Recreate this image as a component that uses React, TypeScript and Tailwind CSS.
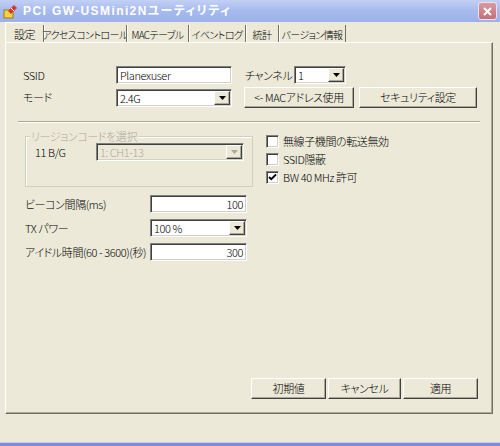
import React from "react";

const font =
  "font-['Noto_Sans_CJK_JP','Liberation_Sans',sans-serif] [font-feature-settings:'palt'] font-light tracking-[-0.4px]";

// sunken white frame used by edits and combo boxes
const sunken =
  "border border-t-[#808080] border-l-[#808080] border-b-white border-r-white shadow-[inset_1px_1px_0_#404040,inset_-1px_-1px_0_#d4d0c8]";

const raised =
  "border border-t-white border-l-white border-b-[#404040] border-r-[#404040] shadow-[inset_-1px_-1px_0_#aca899]";

const Arrow = ({ disabled }: { disabled?: boolean }) => (
  <div className={`w-[16px] h-full bg-[#ece9d8] ${raised} flex items-center justify-center`}>
    <svg width="7" height="4" viewBox="0 0 7 4">
      <path d="M0 0h7L3.5 4z" fill={disabled ? "#aca899" : "#000"} />
    </svg>
  </div>
);

const Combo = ({
  value,
  w,
  disabled,
}: {
  value: string;
  w: string;
  disabled?: boolean;
}) => (
  <div
    className={`${w} h-[18px] ${sunken} ${disabled ? "bg-[#ece9d8] text-[#aca899]" : "bg-white text-black"} flex items-stretch p-[1px]`}
  >
    <div className="flex-1 pl-[2px] leading-[14px] text-[11px] whitespace-nowrap">{value}</div>
    <Arrow disabled={disabled} />
  </div>
);

const Edit = ({ value, w, right }: { value: string; w: string; right?: boolean }) => (
  <div
    className={`${w} h-[18px] bg-white ${sunken} text-[11px] leading-[16px] px-[3px] ${right ? "text-right" : ""}`}
  >
    {value}
  </div>
);

const Button = ({ label, w, h = "h-[21px]" }: { label: string; w: string; h?: string }) => (
  <div className={`${w} ${h} bg-[#ece9d8] ${raised} flex items-center justify-center text-[11px] whitespace-nowrap`}>
    {label}
  </div>
);

const Check = ({ label, checked }: { label: string; checked?: boolean }) => (
  <div className="h-[18px] flex items-center gap-[3px] text-[11px] whitespace-nowrap">
    <div className={`w-[13px] h-[13px] bg-white ${sunken} flex items-center justify-center`}>
      {checked && (
        <svg width="9" height="9" viewBox="0 0 9 9">
          <path d="M1 4l2.2 2.2L8 1.5" stroke="#000" strokeWidth="1.8" fill="none" />
        </svg>
      )}
    </div>
    <span className="ml-[1px]">{label}</span>
  </div>
);

const tabs = [
  { t: "アクセスコントロール", w: "w-[83px]" },
  { t: "MACテーブル", w: "w-[62px]" },
  { t: "イベントログ", w: "w-[57px]" },
  { t: "統計", w: "w-[33px]" },
  { t: "バージョン情報", w: "w-[67px]" },
];

export default function App() {
  return (
    <div className={`w-[500px] h-[446px] bg-[#ece9d8] flex flex-col overflow-hidden text-black ${font}`}>
      {/* title bar */}
      <div className="h-[22px] bg-gradient-to-b from-[#c2d0f5] via-[#a6baee] to-[#9cb1ea] flex items-center pl-[3px] pr-[3px]">
        <svg width="15" height="15" viewBox="0 0 15 15">
          <rect x="1" y="6" width="9" height="8" fill="#f5d33c" stroke="#a07a10" strokeWidth="1" />
          <path d="M5 7l6-6 3 3-6 6z" fill="#d63a2e" />
          <path d="M8 4l3 3" stroke="#fff" strokeWidth="1" />
        </svg>
        <span className="ml-[5px] text-white font-semibold text-[12px] tracking-[1.4px] font-['Liberation_Sans','Noto_Sans_CJK_JP',sans-serif]">
          PCI GW-USMini2Nユーティリティ
        </span>
        <div className="ml-auto w-[19px] h-[18px] rounded-[3px] border border-[#f0e0e4] bg-gradient-to-b from-[#d99aa2] to-[#c46e7a] flex items-center justify-center">
          <svg width="9" height="9" viewBox="0 0 9 9">
            <path d="M1 1l7 7M8 1L1 8" stroke="#fff" strokeWidth="2" />
          </svg>
        </div>
      </div>

      {/* tabs */}
      <div className="h-[20px] flex items-end pl-[5px] text-[10px] tracking-[-0.6px] whitespace-nowrap">
        <div className="h-[20px] w-[38px] pt-[3px] flex items-center justify-center border-t border-l border-white text-[11px]">設定</div>
        {tabs.map((t) => (
          <div
            key={t.t}
            className={`${t.w} h-[17px] pt-[2px] flex items-center justify-center border-l border-[#716f64] shadow-[inset_1px_0_0_white]`}
          >
            {t.t}
          </div>
        ))}
        <div className="h-[17px] border-l border-[#716f64]" />
      </div>

      {/* tab panel */}
      <div className="ml-[5px] mr-[7px] h-[372px] border border-t-white border-l-white border-b-[#716f64] border-r-[#716f64] shadow-[inset_-1px_-1px_0_#aca899] flex flex-col pl-[17px] text-[11px] whitespace-nowrap">
        {/* SSID / channel */}
        <div className="mt-[22px] h-[20px] flex items-center">
          <div className="w-[93px]">SSID</div>
          <Edit value="Planexuser" w="w-[116px]" />
          <div className="ml-[13px] w-[49px]">チャンネル</div>
          <Combo value="1" w="w-[52px]" />
        </div>
        {/* mode / buttons */}
        <div className="mt-[2px] h-[21px] flex items-center">
          <div className="w-[93px]">モード</div>
          <Combo value="2.4G" w="w-[116px]" />
          <div className="ml-[12px]">
            <Button label="<- MACアドレス使用" w="w-[110px]" />
          </div>
          <div className="ml-[5px]">
            <Button label="セキュリティ設定" w="w-[118px]" />
          </div>
        </div>

        <div className="mt-[13px] mr-[12px] -ml-[5px] h-[2px] border-t border-[#aca899] border-b border-b-white" />

        {/* region + checkboxes */}
        <div className="mt-[7px] flex items-start">
          <div className="mt-[6px] ml-[2px] w-[228px] h-[51px] border border-[#d0d0bf] shadow-[inset_1px_1px_0_white] relative">
            <span className="absolute -top-[8px] left-[4px] bg-[#ece9d8] text-[#aca899] px-[1px] leading-[14px]">
              リージョンコードを選択
            </span>
            <div className="mt-[6px] ml-[9px] flex items-center">
              <div className="w-[61px]">11 B/G</div>
              <Combo value="1: CH1-13" w="w-[148px]" disabled />
            </div>
          </div>
          <div className="ml-[13px] mt-[2px] flex flex-col">
            <Check label="無線子機間の転送無効" />
            <Check label="SSID隠蔽" />
            <Check label="BW 40 MHz 許可" checked />
          </div>
        </div>

        {/* beacon etc */}
        <div className="mt-[8px] flex flex-col gap-[6px] ml-[2px]">
          <div className="h-[18px] flex items-center">
            <div className="w-[125px]">ビーコン間隔(ms)</div>
            <Edit value="100" w="w-[97px]" right />
          </div>
          <div className="h-[18px] flex items-center">
            <div className="w-[125px]">TX パワー</div>
            <Combo value="100 %" w="w-[97px]" />
          </div>
          <div className="h-[18px] flex items-center">
            <div className="w-[125px]">アイドル時間(60 - 3600)(秒)</div>
            <Edit value="300" w="w-[97px]" right />
          </div>
        </div>

        {/* bottom buttons */}
        <div className="mt-auto mb-[14px] mr-[14px] flex justify-end gap-[2px]">
          <Button label="初期値" w="w-[75px]" />
          <Button label="キャンセル" w="w-[73px]" />
          <Button label="適用" w="w-[75px]" />
        </div>
      </div>

      <div className="flex-1" />
      <div className="h-[1px] bg-[#c5cdf2]" />
      <div className="h-[3px] bg-[#7d8ddc]" />
    </div>
  );
}
